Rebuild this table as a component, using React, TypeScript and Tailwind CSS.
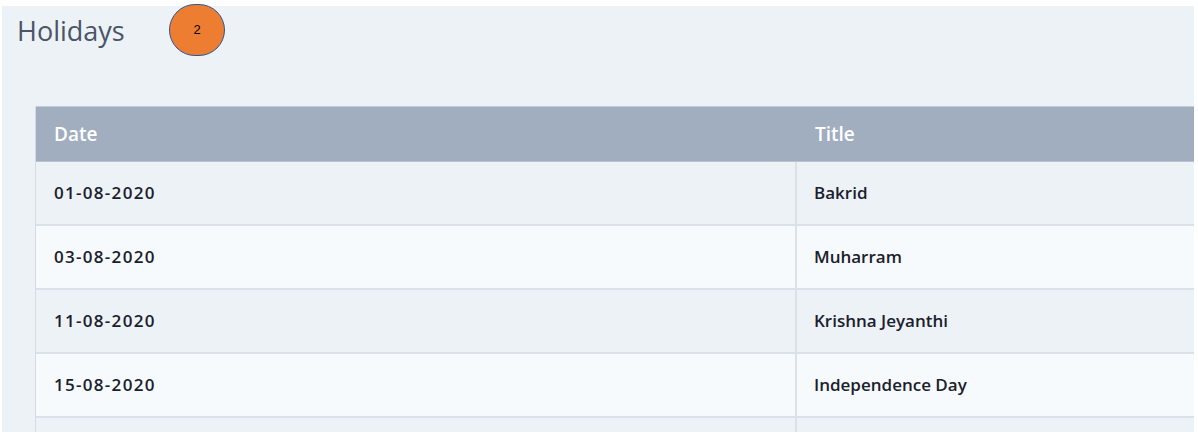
const holidays = [
  { date: "01-08-2020", title: "Bakrid" },
  { date: "03-08-2020", title: "Muharram" },
  { date: "11-08-2020", title: "Krishna Jeyanthi" },
  { date: "15-08-2020", title: "Independence Day" },
  { date: "", title: "" },
];

export default function App() {
  return (
    <div
      className="relative h-[432px] w-[1198px] overflow-hidden bg-white pt-[6px] pl-[2px] pr-[4px]"
      style={{ fontFamily: '"Open Sans", "Noto Sans", sans-serif' }}
    >
      <div className="h-full overflow-hidden bg-[#edf2f7]">
        <h1 className="pl-[15px] pt-[8px] text-[27px] leading-[34px] text-[#4a5568]">
          Holidays
        </h1>

        <div className="ml-[33px] mt-[58px] border-l border-[#d5dce6]">
          {/* header */}
          <div className="grid h-[56px] grid-cols-[761px_1fr] border-t border-b border-t-[#c3ccd8] border-b-[#b9c3d0] bg-[#a0aec0] text-[19px] font-semibold text-white">
            <div className="flex items-center pl-[18px]">Date</div>
            <div className="flex items-center pl-[18px]">Title</div>
          </div>

          {holidays.map((h, i) => (
            <div
              key={i}
              className={`grid h-[64px] grid-cols-[761px_1fr] border-b-2 border-[#dae1e9] text-[17px] font-semibold text-[#1a202c] ${i % 2 === 0 ? "bg-[#edf2f7]" : "bg-[#f7fafc]"}`}
            >
              <div className="flex items-center border-r-2 border-[#dae1e9] pl-[18px] tracking-[1.3px]">
                {h.date}
              </div>
              <div className="flex items-center pl-[17px]">{h.title}</div>
            </div>
          ))}
        </div>
      </div>

      {/* annotation marker */}
      <div
        className="absolute left-[169px] top-[4px] flex h-[52px] w-[56px] items-center justify-center rounded-full border border-[#2f5597] bg-[#ed7d31] text-[13px] text-black"
        style={{ fontFamily: '"Liberation Sans", sans-serif' }}
      >
        2
      </div>
    </div>
  );
}
